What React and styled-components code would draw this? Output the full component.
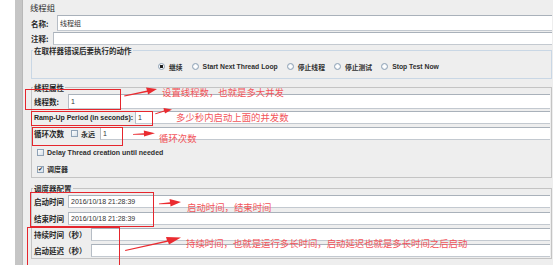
import React from "react";
import styled, { createGlobalStyle } from "styled-components";

const GlobalStyle = createGlobalStyle`
  html, body {
    margin: 0;
    padding: 0;
    background: #ffffff;
  }
  body {
    font-family: "Liberation Sans", "Noto Sans CJK SC", sans-serif;
    color: #2b2b2b;
  }
`;

function Radio({ checked, children }) {
  return (
    <RadioItem>
      <RadioDot $checked={checked} />
      <RadioText>{children}</RadioText>
    </RadioItem>
  );
}

function Check({ checked, children }) {
  return (
    <CheckItem>
      <CheckBox>{checked ? "✔" : ""}</CheckBox>
      <CheckText>{children}</CheckText>
    </CheckItem>
  );
}

function App() {
  return (
    <Page>
      <GlobalStyle />
      <Gutter />
      <Splitter />
      <Panel>
        <Title>线程组</Title>
        <Row $h={16}>
          <Label $w={26}>名称:</Label>
          <Field $ih={16}>线程组</Field>
        </Row>
        <Row $h={14}>
          <Label $w={22}>注释:</Label>
          <Field $ih={13} />
        </Row>

        <Group $mt={1} $color="#c9d7e5">
          <Legend>在取样器错误后要执行的动作</Legend>
          <RadioRow>
            <Radio checked>继续</Radio>
            <Radio>Start Next Thread Loop</Radio>
            <Radio>停止线程</Radio>
            <Radio>停止测试</Radio>
            <Radio>Stop Test Now</Radio>
          </RadioRow>
        </Group>

        <Group $mt={4} $color="#c4c4c4">
          <Legend>线程属性</Legend>
          <Row $h={19} $pl={2}>
            <Label $w={34}>线程数:</Label>
            <Field $ih={15}>1</Field>
          </Row>
          <Row $h={13} $pl={2}>
            <Label $w={101} $latin>Ramp-Up Period (in seconds):</Label>
            <Field $ih={13}>1</Field>
          </Row>
          <Row $h={19} $pl={2}>
            <Label $w={37}>循环次数</Label>
            <Check>永远</Check>
            <Field $ih={13} $ml={5}>1</Field>
          </Row>
          <Row $h={18} $pl={5}>
            <Check>Delay Thread creation until needed</Check>
          </Row>
          <Row $h={16} $pl={5}>
            <Check checked>调度器</Check>
          </Row>
        </Group>

        <Group $mt={6} $color="#c4c4c4">
          <Legend>调度器配置</Legend>
          <Row $h={17} $pl={2}>
            <Label $w={34}>启动时间</Label>
            <Field $ih={13}>2016/10/18 21:28:39</Field>
          </Row>
          <Row $h={17} $pl={2}>
            <Label $w={34}>结束时间</Label>
            <Field $ih={13}>2016/10/18 21:28:39</Field>
          </Row>
          <Row $h={15} $pl={2}>
            <Label $w={57}>持续时间（秒）</Label>
            <Field $ih={13} />
          </Row>
          <Row $h={16} $pl={2}>
            <Label $w={57}>启动延迟（秒）</Label>
            <Field $ih={13} />
          </Row>
        </Group>
      </Panel>

      <Notes>
        <Box style={{ left: 25, top: 89, width: 96, height: 21 }} />
        <Box style={{ left: 31, top: 111, width: 122, height: 15 }} />
        <Box style={{ left: 32, top: 127, width: 91, height: 19 }} />
        <Box style={{ left: 30, top: 192, width: 124, height: 35 }} />
        <Box style={{ left: 27, top: 227, width: 93, height: 60 }} />

        <Arrows width="557" height="265" viewBox="0 0 557 265">
          <polygon points="124,95.5 147,90.5 146,87.5 157,89 148,94.5 147.5,92 124.5,96.5" />
          <polygon points="155,113.5 164,110.5 163.5,108 172,109.5 165,113.5 164.5,111.5 155.5,114.3" />
          <polygon points="133,134 144,133.2 143.8,130.5 155,133.3 144,136.5 144,134.8 133,134.8" />
          <polygon points="159,203.5 170,202.3 169.5,199 181,202 170.5,206.5 170.3,204 159,204.3" />
          <polygon points="125,250 167,240.5 166,237 181,237.5 169,244.5 168,241.8 125.3,251" />
        </Arrows>

        <Note style={{ left: 162, top: 92 }}>设置线程数，也就是多大并发</Note>
        <Note style={{ left: 176, top: 117 }}>多少秒内启动上面的并发数</Note>
        <Note style={{ left: 159, top: 138 }}>循环次数</Note>
        <Note style={{ left: 187, top: 207 }}>启动时间，结束时间</Note>
        <Note style={{ left: 186, top: 243 }}>
          持续时间，也就是运行多长时间，启动延迟也就是多长时间之后启动
        </Note>
      </Notes>
    </Page>
  );
}

const Page = styled.div`
  position: relative;
  width: 557px;
  height: 265px;
  overflow: hidden;
  display: flex;
  background: #ffffff;
`;
const Gutter = styled.div`
  width: 15px;
  flex: none;
`;
const Splitter = styled.div`
  width: 7px;
  flex: none;
  background-color: #e6e6e6;
  background-image: radial-gradient(#a3a3a3 0.5px, transparent 0.9px);
  background-size: 2px 2px;
`;
const Panel = styled.div`
  flex: 1;
  margin-right: 4px;
  padding-left: 7px;
  background: #eeeeee;
  border-left: 1px solid #b8b8b8;
  display: flex;
  flex-direction: column;
`;
const Title = styled.div`
  height: 15px;
  line-height: 14px;
  font-family: "Noto Sans CJK SC", sans-serif;
  font-size: 8.4px;
  color: #2a2a2a;
`;
const Row = styled.div`
  height: ${(p) => p.$h}px;
  padding-left: ${(p) => p.$pl || 1}px;
  display: flex;
  align-items: center;
  flex: none;
`;
const Label = styled.span`
  width: ${(p) => p.$w}px;
  flex: none;
  white-space: nowrap;
  font-family: ${(p) =>
    p.$latin ? '"Liberation Sans", sans-serif' : '"Noto Sans CJK SC", sans-serif'};
  font-size: ${(p) => (p.$latin ? "7px" : "7.5px")};
  font-weight: 700;
  color: #262626;
  letter-spacing: ${(p) => (p.$latin ? "-0.05px" : "0")};
`;
const Field = styled.div`
  flex: 1;
  height: ${(p) => p.$ih}px;
  margin-left: ${(p) => p.$ml || 0}px;
  margin-right: 1px;
  box-sizing: border-box;
  background: #ffffff;
  border-top: 1px solid #a9b1ba;
  border-bottom: 1px solid #c3c9d0;
  border-left: 1px solid #b6bdc5;
  padding-left: 2px;
  display: flex;
  align-items: center;
  font-family: "Liberation Sans", "Noto Sans CJK SC", sans-serif;
  font-size: 7px;
  color: #333;
`;
const Group = styled.fieldset`
  margin: ${(p) => p.$mt}px 1px 0 1px;
  padding: 0;
  min-width: 0;
  border: 1px solid ${(p) => p.$color};
  flex: none;
`;
const Legend = styled.legend`
  padding: 0 1px;
  margin-left: 1px;
  height: 9px;
  line-height: 9px;
  font-family: "Noto Sans CJK SC", sans-serif;
  font-size: 7.5px;
  font-weight: 700;
  color: #2a2a2a;
`;
const RadioRow = styled.div`
  height: 23px;
  padding-left: 126px;
  display: flex;
  align-items: center;
  gap: 9px;
`;
const RadioItem = styled.span`
  display: flex;
  align-items: center;
  gap: 4px;
`;
const RadioDot = styled.span`
  width: 7px;
  height: 7px;
  box-sizing: border-box;
  border-radius: 50%;
  border: 1px solid #8fa2b6;
  background: ${(p) =>
    p.$checked
      ? "radial-gradient(circle, #1e1e1e 0 1.4px, #ffffff 1.8px, #d3dde7 100%)"
      : "radial-gradient(circle, #ffffff 0 30%, #d3dde7 100%)"};
`;
const RadioText = styled.span`
  font-family: "Liberation Sans", "Noto Sans CJK SC", sans-serif;
  font-size: 6.8px;
  font-weight: 700;
  color: #2e2e2e;
  white-space: nowrap;
`;
const CheckItem = styled.span`
  display: flex;
  align-items: center;
  gap: 3px;
`;
const CheckBox = styled.span`
  width: 7px;
  height: 7px;
  box-sizing: border-box;
  border: 1px solid #8fa2b6;
  background: linear-gradient(135deg, #ffffff, #d6dfe8);
  font-size: 6px;
  line-height: 5px;
  text-align: center;
  color: #222;
`;
const CheckText = styled.span`
  font-family: "Liberation Sans", "Noto Sans CJK SC", sans-serif;
  font-size: 7px;
  font-weight: 700;
  color: #2e2e2e;
  white-space: nowrap;
`;
const Notes = styled.div`
  position: absolute;
  inset: 0;
  pointer-events: none;
`;
const Box = styled.div`
  position: absolute;
  box-sizing: border-box;
  border: 1.5px solid #e5262d;
`;
const Arrows = styled.svg`
  position: absolute;
  left: 0;
  top: 0;
  fill: #ea2b30;
`;
const Note = styled.div`
  position: absolute;
  transform: translateY(-50%);
  font-family: "Noto Sans CJK SC", sans-serif;
  font-size: 9.4px;
  line-height: 12px;
  color: #f2545a;
  white-space: nowrap;
`;

export default App;
